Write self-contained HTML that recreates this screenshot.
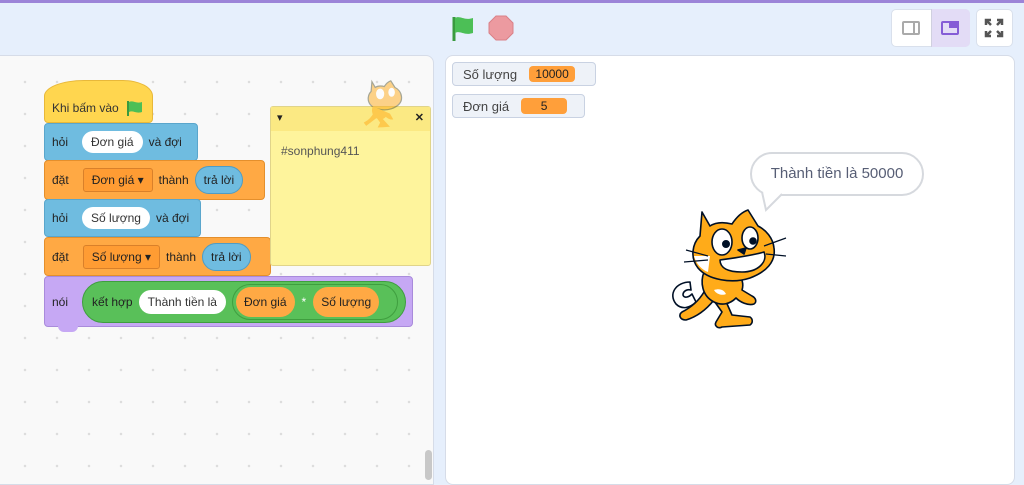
<!DOCTYPE html>
<html><head><meta charset="utf-8"><style>
*{margin:0;padding:0;box-sizing:border-box}
body{width:1024px;height:474px;overflow:hidden;background:#e6effc;font-family:"Liberation Sans",sans-serif;position:relative}
.a{position:absolute}
.top{left:0;top:0;width:1024px;height:3px;background:#9c84d8}
.code{left:-4px;top:55px;width:438px;height:430px;background:#f9f9f9;border:1px solid #d6dce8;border-radius:0 8px 0 0;
background-image:radial-gradient(circle,#dcdcdc 1px,transparent 1.5px);background-size:32px 32px;background-position:12px 10px}
.stage{left:445px;top:55px;width:570px;height:430px;background:#fff;border:1px solid #d6dce8;border-radius:8px}
.blk{position:absolute;font-size:12px;color:#fff;display:flex;align-items:center;padding-left:7px;border-radius:4px;white-space:nowrap}
.y{background:#ffd64f;border:1px solid #e8b83a;color:#333}
.b{background:#6fbce0;border:1px solid #5aa6cc;color:#222}
.o{background:#ffa944;border:1px solid #e48f2c;color:#222}
.p{background:#c6a8f4;border:1px solid #a98bdb;color:#222}
.in{background:#fff;color:#333;border-radius:14px;padding:4px 9px;margin:0 6px;font-size:12px}
.dd{background:#ff9c33;border:1px solid #d9802a;border-radius:3px;padding:4px 8px;margin:0 6px;color:#222}
.rep{background:#6fbce0;border:1px solid #4f9cc4;border-radius:14px;padding:6px 8px;margin-left:6px;color:#222}
.mon{position:absolute;left:452px;background:#eef2f8;border:1px solid #c9d2e2;border-radius:4px;font-size:13px;color:#444;display:flex;align-items:center;padding-left:10px;height:24px}
.val{background:#ff9f3a;color:#222;border-radius:4px;padding:1px 0;text-align:center;margin-left:12px;font-size:12px}
</style></head><body>
<div class="a top"></div>
<div class="a code"></div>
<div class="a" style="left:425px;top:450px;width:7px;height:30px;background:#c8c8c8;border-radius:4px"></div>
<div class="a stage"></div>

<svg class="a" style="left:450px;top:14px" width="28" height="28" viewBox="0 0 28 28"><path d="M4 3v24" stroke="#3a9a3f" stroke-width="3"/><path d="M5 4c5-3 9 3 18 0v15c-9 3-13-3-18 0z" fill="#4cbf56"/></svg>
<svg class="a" style="left:487px;top:14px" width="28" height="28" viewBox="0 0 28 28"><polygon points="9,2 19,2 26,9 26,19 19,26 9,26 2,19 2,9" fill="#ec9aa0" stroke="#d98088"/></svg>

<div class="a" style="left:891px;top:9px;width:79px;height:38px;background:#fff;border:1px solid #d9e0ec;border-radius:5px"></div>
<div class="a" style="left:931px;top:9px;width:39px;height:38px;background:#e3dcf6;border-left:1px solid #d0d0e0;border-radius:0 5px 5px 0"></div>
<div class="a" style="left:902px;top:21px;width:18px;height:14px;border:2px solid #aaa;border-radius:2px"></div>
<div class="a" style="left:913px;top:21px;width:2px;height:14px;background:#aaa"></div>
<div class="a" style="left:941px;top:21px;width:18px;height:14px;border:2px solid #855cd6;border-radius:2px"></div>
<div class="a" style="left:949px;top:21px;width:10px;height:7px;background:#855cd6"></div>
<div class="a" style="left:976px;top:9px;width:37px;height:38px;background:#fff;border:1px solid #d9e0ec;border-radius:5px"></div>
<svg class="a" style="left:984px;top:18px" width="20" height="20" viewBox="0 0 20 20" stroke="#555" stroke-width="2.5" fill="none"><path d="M2 7V2h5M2 2l5 5M18 7V2h-5M18 2l-5 5M2 13v5h5M2 18l5-5M18 13v5h-5M18 18l-5-5"/></svg>

<div class="mon" style="top:62px;width:144px">Số lượng<span class="val" style="width:46px">10000</span></div>
<div class="mon" style="top:94px;width:133px">Đơn giá<span class="val" style="width:46px">5</span></div>

<div class="a" style="left:750px;top:152px;width:174px;height:44px;background:#fff;border:2px solid #d6d9de;border-radius:22px;font-size:15px;color:#575e75;text-align:center;line-height:40px">Thành tiền là 50000</div>
<svg class="a" style="left:760px;top:192px" width="30" height="22"><path d="M2 0 L6 18 L22 2" fill="#fff" stroke="#d6d9de" stroke-width="2"/></svg>

<svg class="a" style="left:668px;top:206px" width="122" height="126" viewBox="0 0 122 126">
<g stroke="#001026" stroke-width="1.6" stroke-linejoin="round" stroke-linecap="round">
<path d="M22 76c-14 0-22 12-14 22 6 6 14 4 20-2l-4-8c-4 4-8 4-9 1 0-4 4-6 8-5z" fill="#fff"/>
<path d="M36 86c-6 10-14 16-22 20-4 3-2 8 4 8 10-3 20-10 28-20z" fill="#ffab19"/>
<path d="M44 92l10 14 -6 10c-2 4 2 7 6 5l28 -2c3-2 3-6 0-8l-18-2 -8-18z" fill="#ffab19"/>
<path d="M36 66c-4 10-2 24 10 30 8 4 16 2 22-4 4 4 12 8 18 6 3-2 2-6-2-8l-10-6c2-6 0-12-4-16z" fill="#ffab19"/>
<path d="M46 84c2 4 8 6 12 4-2-4-6-6-12-4z" fill="#fff" stroke="none"/>
<path d="M34 6l-2 24c-8 8-10 22-2 32 10 12 34 16 52 10 16-6 26-16 24-30-1-10-8-18-16-22L80 4c-6 2-12 8-16 14-8-2-16-2-22 2z" fill="#ffab19"/>
<path d="M26 50c2 8 8 14 14 16l2-16z" fill="#fff" stroke="none"/>
<ellipse cx="54" cy="36" rx="10" ry="13" fill="#fff"/><ellipse cx="82" cy="32" rx="8" ry="11" fill="#fff"/>
<circle cx="58" cy="38" r="3.2" fill="#001026"/><circle cx="85" cy="35" r="3" fill="#001026"/>
<path d="M70 44l8-2-2 6z" fill="#001026"/>
<path d="M52 54c14-2 30-4 44-8 4 10-6 20-22 20-14 0-22-4-22-12z" fill="#fff"/>
</g>
<path d="M18 44l22 6M16 56l24-2M96 40l22-8M98 48l20 2" stroke="#001026" stroke-width="1.2"/>
</svg>

<div class="blk y" style="left:44px;top:80px;width:109px;height:43px;border-radius:40px 30px 4px 4px/16px 16px 4px 4px;padding-top:12px">Khi bấm vào <svg width="20" height="18" style="margin-left:6px"><path d="M3 2v15" stroke="#3a9a3f" stroke-width="2"/><path d="M4 3c4-2 7 2 13 0v10c-6 2-9-2-13 0z" fill="#4cbf56"/></svg></div>
<div class="blk b" style="left:44px;top:123px;width:154px;height:38px">hỏi<span class="in" style="margin-left:14px">Đơn giá</span>và đợi</div>
<div class="blk o" style="left:44px;top:160px;width:221px;height:40px">đặt<span class="dd" style="margin-left:14px">Đơn giá ▾</span>thành<span class="rep">trả lời</span></div>
<div class="blk b" style="left:44px;top:199px;width:157px;height:38px">hỏi<span class="in" style="margin-left:14px">Số lượng</span>và đợi</div>
<div class="blk o" style="left:44px;top:237px;width:227px;height:39px">đặt<span class="dd" style="margin-left:14px">Số lượng ▾</span>thành<span class="rep">trả lời</span></div>
<div class="blk p" style="left:44px;top:276px;width:369px;height:51px">nói
<div style="margin-left:14px;background:#59c059;border:1px solid #3f9e3f;border-radius:22px;height:42px;display:flex;align-items:center;padding-left:9px;width:324px;color:#222;white-space:nowrap">kết hợp<span class="in" style="margin:0 6px;padding:5px 9px">Thành tiền là</span>
<div style="background:#59c059;border:1px solid #3f9e3f;border-radius:18px;height:36px;display:flex;align-items:center;padding:0 3px;width:166px">
<span style="background:#ffa944;border-radius:15px;padding:8px 8px;color:#222">Đơn giá</span><span style="margin:0 7px;color:#fff">*</span><span style="background:#ffa944;border-radius:15px;padding:8px 8px;color:#222">Số lượng</span></div></div></div>
<div class="a" style="left:58px;top:326px;width:20px;height:6px;background:#c6a8f4;border-radius:0 0 6px 6px"></div>

<div class="a" style="left:270px;top:106px;width:161px;height:160px;background:#fef49c;border:1px solid #e0d48a;border-radius:3px">
<div style="height:24px;background:#fbe983;font-size:11px;color:#222;padding:4px 6px;display:flex;justify-content:space-between"><span>▾</span><b>✕</b></div>
<div style="font-size:12px;color:#555;padding:13px 10px">#sonphung411</div></div>
<svg class="a" style="left:358px;top:76px;opacity:.5" width="50" height="58" viewBox="0 0 122 126"><path d="M34 6l-2 24c-8 8-10 22-2 32 10 12 34 16 52 10 16-6 26-16 24-30-1-10-8-18-16-22L80 4c-6 2-12 8-16 14-8-2-16-2-22 2z" fill="#ffab19" stroke="#553" stroke-width="3"/><path d="M36 66c-4 10-2 24 10 30 8 4 16 2 22-4 4 4 12 8 18 6l-8-14zM36 86c-6 10-14 16-22 20l6 8 26-20zM44 92l10 14-6 12 30-2-22-24z" fill="#ffab19"/><ellipse cx="54" cy="36" rx="10" ry="13" fill="#fff"/><ellipse cx="82" cy="32" rx="8" ry="11" fill="#fff"/></svg>
</body></html>
